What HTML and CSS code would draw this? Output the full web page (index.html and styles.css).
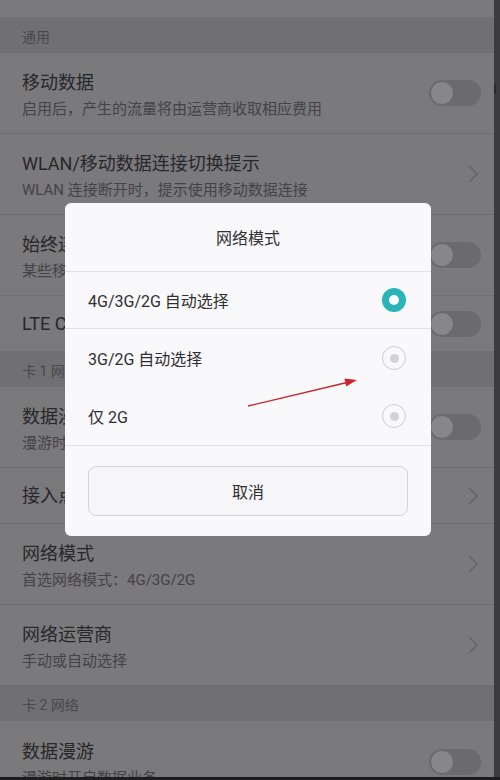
FILE: index.html
```html
<!DOCTYPE html>
<html lang="zh-CN">
<head>
<meta charset="utf-8">
<title>网络模式</title>
<link rel="stylesheet" href="styles.css">
</head>
<body>
<div class="screen">
  <div class="list">
    <div class="stub"></div>
    <div class="section">通用</div>
    <div class="row two">
      <div class="texts"><div class="title">移动数据</div><div class="sub">启用后，产生的流量将由运营商收取相应费用</div></div>
      <span class="switch"><span class="thumb"></span></span>
    </div>
    <div class="row two">
      <div class="texts"><div class="title">WLAN/移动数据连接切换提示</div><div class="sub">WLAN 连接断开时，提示使用移动数据连接</div></div>
      <svg class="chev" viewBox="0 0 10 18" width="10" height="18"><polyline points="1,1 9,9 1,17"/></svg>
    </div>
    <div class="row two">
      <div class="texts"><div class="title">始终连接数据业务</div><div class="sub">某些移动网络下保持数据连接</div></div>
      <span class="switch"><span class="thumb"></span></span>
    </div>
    <div class="row one">
      <div class="texts"><div class="title">LTE CA</div></div>
      <span class="switch"><span class="thumb"></span></span>
    </div>
    <div class="section">卡 1 网络</div>
    <div class="row two">
      <div class="texts"><div class="title">数据漫游</div><div class="sub">漫游时开启数据业务</div></div>
      <span class="switch"><span class="thumb"></span></span>
    </div>
    <div class="row one">
      <div class="texts"><div class="title">接入点名称</div></div>
      <svg class="chev" viewBox="0 0 10 18" width="10" height="18"><polyline points="1,1 9,9 1,17"/></svg>
    </div>
    <div class="row two">
      <div class="texts"><div class="title">网络模式</div><div class="sub">首选网络模式：4G/3G/2G</div></div>
      <svg class="chev" viewBox="0 0 10 18" width="10" height="18"><polyline points="1,1 9,9 1,17"/></svg>
    </div>
    <div class="row two">
      <div class="texts"><div class="title">网络运营商</div><div class="sub">手动或自动选择</div></div>
      <svg class="chev" viewBox="0 0 10 18" width="10" height="18"><polyline points="1,1 9,9 1,17"/></svg>
    </div>
    <div class="section">卡 2 网络</div>
    <div class="row two last">
      <div class="texts"><div class="title">数据漫游</div><div class="sub">漫游时开启数据业务</div></div>
      <span class="switch"><span class="thumb"></span></span>
    </div>
  </div>
  <div class="edge"><span class="edge-mark"></span></div>
</div>

<div class="dialog">
  <div class="dlg-title">网络模式</div>
  <div class="opt first"><span class="opt-text">4G/3G/2G 自动选择</span><span class="radio on"></span></div>
  <div class="opt"><span class="opt-text">3G/2G 自动选择</span><span class="radio"></span></div>
  <div class="opt end"><span class="opt-text">仅 2G</span><span class="radio"></span></div>
  <div class="btn-wrap"><div class="btn">取消</div></div>
</div>

<svg class="arrow" width="500" height="780" viewBox="0 0 500 780">
  <line x1="248" y1="406" x2="347" y2="382.5" stroke="#c8262a" stroke-width="1.3"/>
  <polygon points="357,380 346.2,386.6 344.4,378.6" fill="#c8262a"/>
</svg>
</body>
</html>
```

FILE: styles.css
```css
html, body {
  margin: 0;
  padding: 0;
}
body {
  width: 500px;
  height: 780px;
  overflow: hidden;
  background: #1d1c1e;
  font-family: Roboto, "Noto Sans CJK SC", sans-serif;
  position: relative;
}
.screen {
  display: flex;
  height: 777px;
  overflow: hidden;
}
.list {
  flex: 1;
  background: #7a797c;
  overflow: hidden;
}
.edge {
  width: 6px;
  background: #3c3b3e;
  position: relative;
}
.edge-mark {
  position: absolute;
  left: 0;
  top: 84px;
  width: 2px;
  height: 10px;
  background: #2a292b;
}
.stub {
  height: 17px;
  border-bottom: 1px solid #727174;
}
.section {
  height: 35px;
  box-sizing: border-box;
  display: flex;
  align-items: center;
  padding-left: 22px;
  background: #706f72;
  color: #49484b;
  font-size: 14px;
}
.row {
  display: flex;
  align-items: center;
  justify-content: space-between;
  box-sizing: border-box;
  padding: 0 13px 0 22px;
  border-bottom: 1px solid #6e6d70;
}
.row.two { height: 81px; }
.row.one { height: 56px; }
.row.last { border-bottom: none; }
.texts {
  display: flex;
  flex-direction: column;
  gap: 4px;
  white-space: nowrap;
}
.row.two .texts {
  margin-top: 4px;
}
.title {
  font-size: 18px;
  line-height: 24px;
  color: #28272a;
}
.sub {
  font-size: 15px;
  line-height: 20px;
  color: #444346;
}
.switch {
  width: 52px;
  height: 26px;
  border-radius: 13px;
  background: #6b6a6d;
  display: flex;
  align-items: center;
  flex-shrink: 0;
}
.thumb {
  width: 24px;
  height: 24px;
  box-sizing: border-box;
  border-radius: 50%;
  background: #878689;
  border: 1px solid #69686b;
  margin-left: 1px;
}
.chev {
  margin-right: 3px;
  flex-shrink: 0;
}
.chev polyline {
  fill: none;
  stroke: #636265;
  stroke-width: 1.4;
}

.dialog {
  position: absolute;
  left: 65px;
  top: 203px;
  width: 366px;
  height: 333px;
  background: #f9f8fa;
  border-radius: 6px;
  overflow: hidden;
  display: flex;
  flex-direction: column;
}
.dlg-title {
  height: 68px;
  display: flex;
  align-items: center;
  justify-content: center;
  font-size: 16px;
  color: #323133;
  border-bottom: 1px solid #e1e0e2;
}
.opt {
  height: 58px;
  display: flex;
  align-items: center;
  justify-content: space-between;
  padding: 0 25px 0 23px;
  box-sizing: border-box;
}
.opt.first {
  border-bottom: 1px solid #e1e0e2;
}
.opt.end {
  border-bottom: 1px solid #e1e0e2;
  height: 59px;
}
.opt-text {
  font-size: 16px;
  color: #2f2e30;
}
.radio {
  width: 24px;
  height: 24px;
  box-sizing: border-box;
  border-radius: 50%;
  border: 1.5px solid #cbcacc;
  display: flex;
  align-items: center;
  justify-content: center;
}
.radio::after {
  content: "";
  width: 9px;
  height: 9px;
  border-radius: 50%;
  background: #d3d2d4;
}
.radio.on {
  border: 7.5px solid #28b4b8;
  background: #ffffff;
}
.radio.on::after {
  display: none;
}
.btn-wrap {
  padding: 20px 23px;
}
.btn {
  height: 50px;
  box-sizing: border-box;
  border: 1px solid #d3d2d4;
  border-radius: 8px;
  background: #f6f5f7;
  display: flex;
  align-items: center;
  justify-content: center;
  font-size: 16px;
  color: #2f2e30;
}
.arrow {
  position: absolute;
  left: 0;
  top: 0;
  pointer-events: none;
}
```
